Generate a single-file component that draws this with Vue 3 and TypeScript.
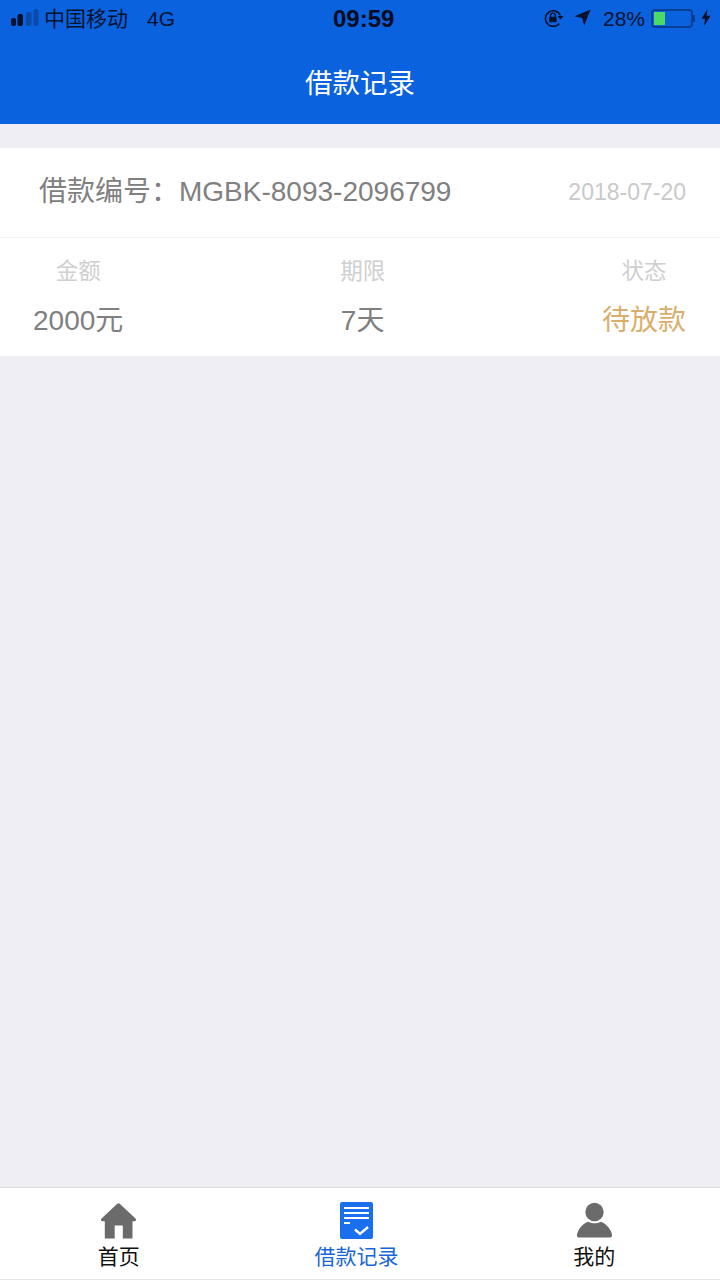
<script setup lang="ts">
const cols = [
  { label: '金额', value: '2000元', cls: '' },
  { label: '期限', value: '7天', cls: '' },
  { label: '状态', value: '待放款', cls: 'gold' },
]
</script>

<template>
  <div class="page">
    <header class="top">
      <div class="status">
        <div class="st-left">
          <svg class="signal" width="28" height="17" viewBox="0 0 28 17">
            <rect x="0" y="9" width="5" height="8" rx="2" fill="#04122e" />
            <rect x="6.500" y="5" width="5.500" height="12" rx="2" fill="#04122e" />
            <rect x="15" y="3" width="5.500" height="14" rx="2" fill="#0a4aa8" />
            <rect x="22.500" y="0" width="5" height="17" rx="2" fill="#0a4aa8" />
          </svg>
          <span class="carrier">中国移动</span>
          <span class="net">4G</span>
        </div>
        <div class="clock">09:59</div>
        <div class="st-right">
          <svg class="ic-lock" width="20" height="18" viewBox="0 0 20 18" fill="none">
            <path d="M15.300 14.500A7.800 7.800 0 1 1 16.400 6.500" stroke="#04122e" stroke-width="1.600" />
            <path d="M13.500 7h6l-3 3.600z" fill="#04122e" />
            <path d="M6.500 8V6.500a2.400 2.400 0 0 1 4.800 0V8" stroke="#04122e" stroke-width="1.300" />
            <rect x="5.200" y="7.800" width="7.400" height="5.400" rx="0.800" fill="#04122e" />
          </svg>
          <svg class="ic-loc" width="17" height="17" viewBox="0 0 18 18">
            <path d="M17.500 .5 10.800 17.500 8.600 9.400 .5 7.600z" fill="#04122e" />
          </svg>
          <span class="pct">28%</span>
          <div class="battery">
            <div class="level"></div>
          </div>
          <div class="nub"></div>
          <svg class="ic-bolt" width="10" height="17" viewBox="0 0 11 19">
            <path d="M7.200 0 .4 10.800h4L3.400 19l7.200-11.400H6.200z" fill="#04122e" />
          </svg>
        </div>
      </div>
      <div class="title">借款记录</div>
    </header>

    <main class="body">
      <section class="card">
        <div class="head">
          <span class="code">借款编号：<span class="num">MGBK-8093-2096799</span></span>
          <span class="date">2018-07-20</span>
        </div>
        <div class="cols">
          <div v-for="c in cols" :key="c.label" class="col">
            <span class="lab">{{ c.label }}</span>
            <span class="val" :class="c.cls">{{ c.value }}</span>
          </div>
        </div>
      </section>
    </main>

    <nav class="tabs">
      <div class="tab">
        <svg width="37" height="37" viewBox="0 0 37 37">
          <path d="M17.300 1.800a1.800 1.800 0 0 1 2.400 0L35.500 16.500c1.200 1.200.5 2.800-1 2.800H32.500V36.500H22.800V23.500H14.700V36.500H4.800V19.300H2.500c-1.500 0-2.200-1.600-1-2.800z" fill="#6b6b6b" />
        </svg>
        <span>首页</span>
      </div>
      <div class="tab on">
        <svg width="37" height="37" viewBox="0 0 37 37">
          <rect x="2" y="0" width="33" height="37" rx="2" fill="#1a6fee" />
          <path d="M6 6h25M6 11h25M6 16h25M6 21h6" stroke="#fff" stroke-width="2.200" />
          <path d="M17 27.500l5 4.500 8-7" stroke="#fff" stroke-width="2.400" fill="none" />
        </svg>
        <span>借款记录</span>
      </div>
      <div class="tab">
        <svg width="37" height="37" viewBox="0 0 37 37">
          <circle cx="18.500" cy="10" r="9.200" fill="#6b6b6b" />
          <path d="M3 35.500C0 35.500 1 32 1.800 30 4 24.500 8.500 21 12.500 19.800c3.500 2 8.500 2 12 0C28.500 21 33 24.500 35.200 30c.8 2 1.800 5.500-1.200 5.500z" fill="#6b6b6b" />
        </svg>
        <span>我的</span>
      </div>
    </nav>
  </div>
</template>

<style>
html, body { margin: 0; padding: 0; background: #efeef4; }
</style>

<style scoped>
.page {
  width: 720px;
  height: 1280px;
  display: flex;
  flex-direction: column;
  background: #efeef4;
  font-family: "Liberation Sans", "Noto Sans CJK SC", sans-serif;
  overflow: hidden;
}
.top {
  height: 124px;
  background: #0a62de;
  display: flex;
  flex-direction: column;
  flex: none;
}
.status {
  height: 35px;
  padding: 0 9px 0 11px;
  display: flex;
  align-items: center;
  justify-content: space-between;
  color: #04122e;
  position: relative;
  font-size: 21px;
}
.st-left, .st-right { display: flex; align-items: center; }
.carrier { margin-left: 5px; margin-bottom: 2px; }
.net { margin-left: 19px; margin-top: 2px; }
.clock {
  position: absolute;
  left: 333px;
  top: 5px;
  font-size: 24px;
  line-height: 28px;
  font-weight: 700;
  color: #020b20;
}
.ic-lock { margin-right: 10px; }
.ic-loc { margin-right: 12px; }
.pct { margin-right: 6px; margin-top: 3px; }
.battery {
  width: 42px;
  height: 19px;
  box-sizing: border-box;
  border: 2px solid #0a3f94;
  border-radius: 4px;
  padding: 1px;
  margin-top: 1px;
}
.level { width: 11px; height: 100%; background: #4cd964; }
.nub { width: 2px; height: 7px; background: #0a3f94; margin: 1px 6px 0 0; }
.title {
  flex: 1;
  display: flex;
  align-items: center;
  justify-content: center;
  color: #fff;
  font-size: 27.500px;
  padding-top: 3px;
}
.body { flex: 1; padding-top: 24px; }
.card { background: #fff; }
.head {
  height: 90px;
  box-sizing: border-box;
  padding: 0 34px 0 39px;
  display: flex;
  align-items: center;
  justify-content: space-between;
  border-bottom: 1px solid #f2f2f4;
}
.code { color: #808080; font-size: 28px; margin-bottom: 7px; }
.date { color: #c9c9c9; font-size: 23px; }
.cols {
  height: 118px;
  box-sizing: border-box;
  padding: 18px 34px 0 33px;
  display: flex;
  justify-content: space-between;
}
.col { display: flex; flex-direction: column; align-items: center; gap: 15px; }
.lab { color: #cfcfcf; font-size: 22.500px; line-height: 32px; }
.val { color: #808080; font-size: 28px; line-height: 36px; }
.gold { color: #d9ae6a; }
.tabs {
  height: 93px;
  box-sizing: border-box;
  flex: none;
  background: #fff;
  border-top: 1px solid #dcdcdc;
  border-bottom: 1px solid #e8e8e8;
  padding: 14px 7px 0 0;
  display: grid;
  grid-template-columns: repeat(3, 1fr);
}
.tab {
  display: flex;
  flex-direction: column;
  align-items: center;
  font-size: 21px;
  line-height: 28px;
  color: #111;
  gap: 4px;
}
.on { color: #1a66d6; }
</style>
